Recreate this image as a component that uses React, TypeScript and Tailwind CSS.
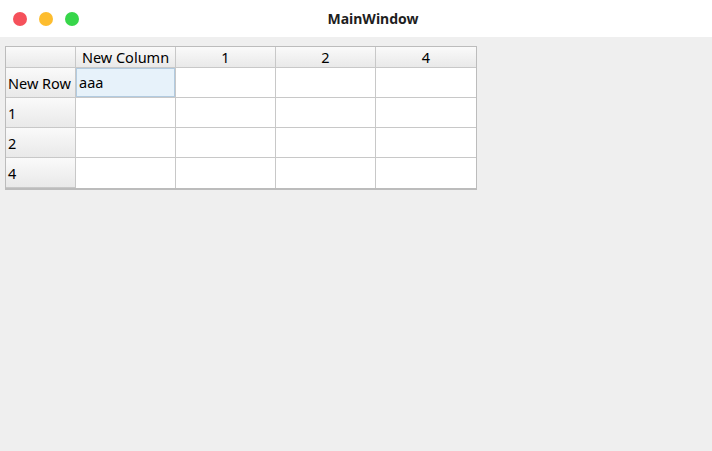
const columns = ['New Column', '1', '2', '4'];
const rows = ['New Row', '1', '2', '4'];

const font = { fontFamily: '"Noto Sans", "Open Sans", sans-serif' };

export default function App() {
  return (
    <div className="w-[712px] h-[451px] flex flex-col bg-[#efefef] text-black" style={font}>
      {/* title bar */}
      <div className="h-[37px] bg-white flex items-center relative">
        <div className="flex items-center gap-[12px] pl-[13px]">
          <span className="w-[14px] h-[14px] rounded-full bg-[#f5515b]" />
          <span className="w-[14px] h-[14px] rounded-full bg-[#fdbd2f]" />
          <span className="w-[14px] h-[14px] rounded-full bg-[#37d64a]" />
        </div>
        <div className="absolute inset-0 flex items-center justify-center pl-[34px] text-[14px] font-bold text-[#1e1e1e]">
          MainWindow
        </div>
      </div>

      {/* table */}
      <div className="pt-[9px] pl-[5px]">
        <div className="inline-block border-l border-t border-[#bcbcbc] border-r border-b-2 bg-white text-[14.5px]">
          <div className="flex">
            <div className="w-[70px] h-[21px] border-r border-b border-[#c8c8c8] bg-gradient-to-b from-[#fafafa] to-[#e9e9e9]" />
            {columns.map((c) => (
              <div
                key={c}
                className="w-[100px] h-[21px] border-r border-b border-[#c8c8c8] last:border-r-0 bg-gradient-to-b from-[#fafafa] to-[#e9e9e9] flex items-center justify-center leading-none pt-[1px]"
              >
                {c}
              </div>
            ))}
          </div>
          {rows.map((r, ri) => (
            <div key={r} className="flex">
              <div className="w-[70px] h-[30px] border-r border-b border-[#c8c8c8] bg-gradient-to-b from-[#fafafa] to-[#e9e9e9] flex items-center pl-[2px] pt-[2px]">
                {r}
              </div>
              {columns.map((c, ci) => {
                const selected = ri === 0 && ci === 0;
                return (
                  <div
                    key={c}
                    className={
                      'w-[100px] h-[30px] border-r border-b border-[#c8c8c8] last:border-r-0 ' +
                      (ri === rows.length - 1 ? 'border-b-0 ' : '')
                    }
                  >
                    {selected && (
                      <div className="w-full h-full bg-[#e7f2fa] border border-[#b2cbe0] flex items-center pl-[2px]">
                        aaa
                      </div>
                    )}
                  </div>
                );
              })}
            </div>
          ))}
        </div>
      </div>
    </div>
  );
}
